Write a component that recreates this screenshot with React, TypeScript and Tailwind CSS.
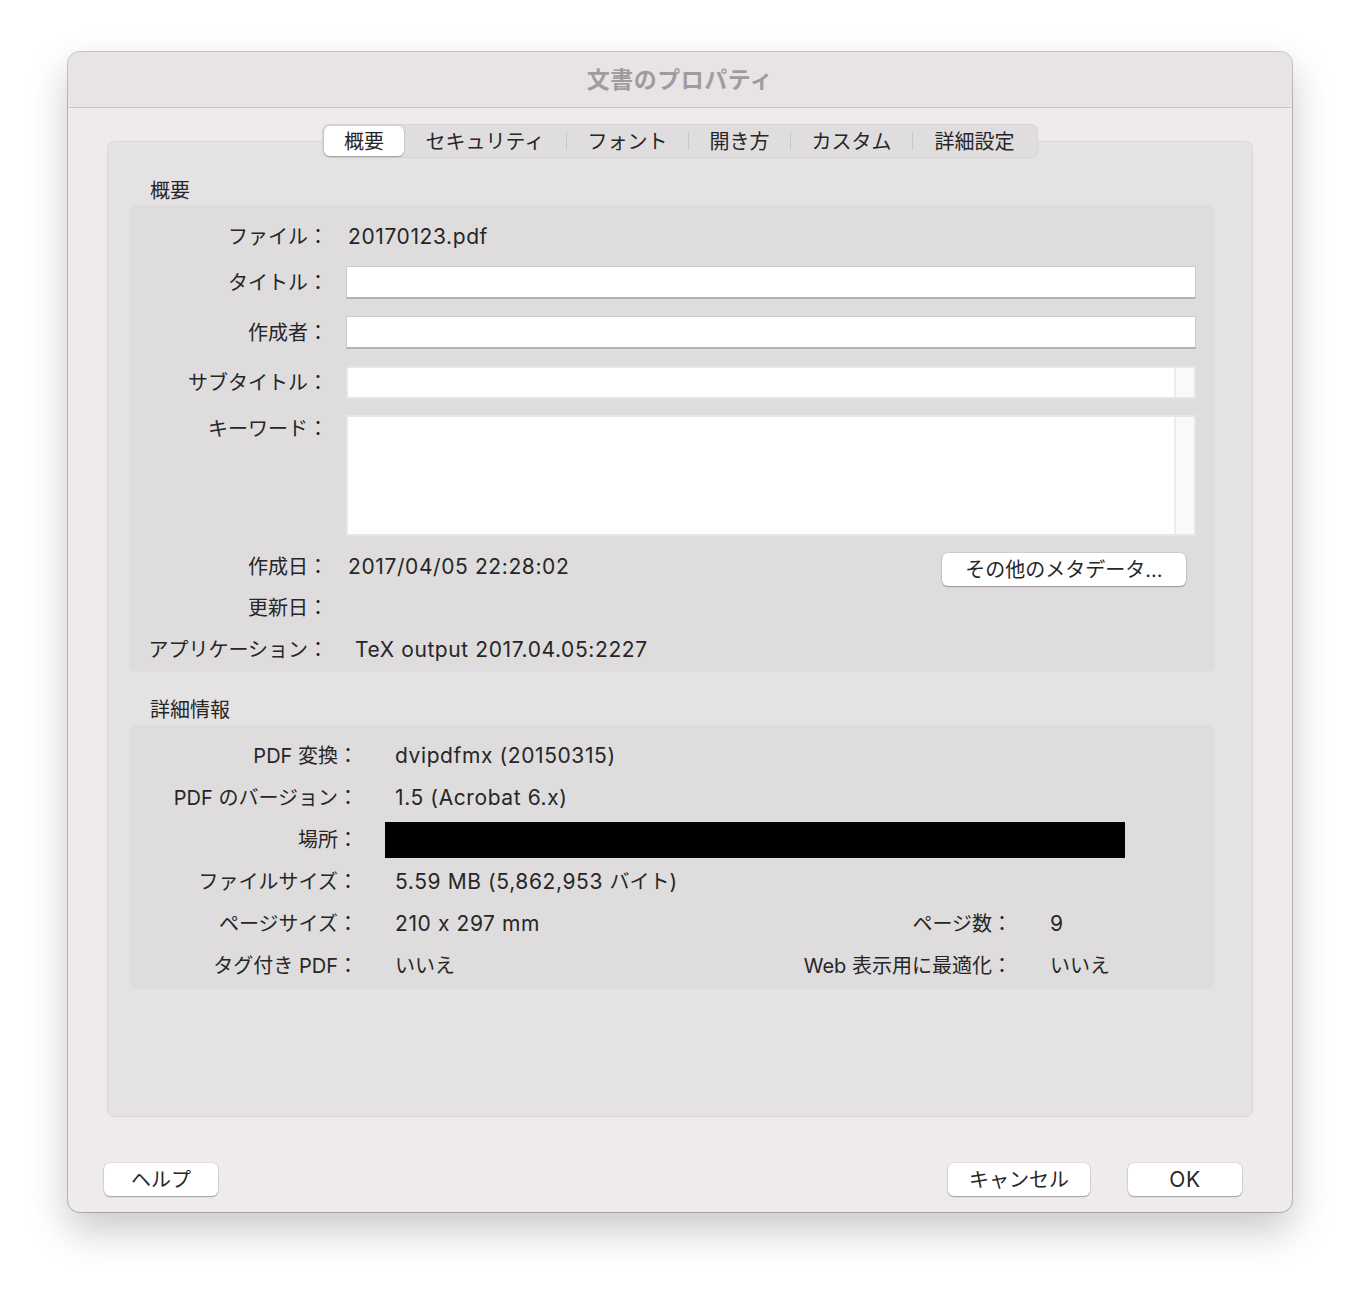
import React from "react";

const tabs = [
  { label: "概要", w: "w-[80px]" },
  { label: "セキュリティ", w: "w-[162px]" },
  { label: "フォント", w: "w-[121px]" },
  { label: "開き方", w: "w-[101px]" },
  { label: "カスタム", w: "w-[121px]" },
  { label: "詳細設定", w: "w-[123px]" },
];

const LAT = "text-[21px] tracking-[0.6px] whitespace-nowrap";

function Field() {
  return (
    <div className="h-[33px] w-[850px] bg-white border border-[#cbc9ca] border-b-2 border-b-[#b4b2b3]" />
  );
}

function ScrollField({ h }: { h: string }) {
  return (
    <div className={`${h} w-[850px] bg-white border-2 border-[#e7e5e6] flex`}>
      <div className="flex-1" />
      <div className="w-[20px] h-full bg-[#f9f9f9] border-l-2 border-[#ececec]" />
    </div>
  );
}

function Btn({ children, w }: { children: React.ReactNode; w: string }) {
  return (
    <div
      className={`${w} h-[33px] bg-white rounded-[6px] flex items-center justify-center text-[20px] text-[#262626] shadow-[0_0_0_0.5px_rgba(0,0,0,0.12),0_1px_1.5px_rgba(0,0,0,0.3)]`}
    >
      {children}
    </div>
  );
}

function Row1({
  label,
  children,
  className = "",
  top = false,
}: {
  label: string;
  children?: React.ReactNode;
  className?: string;
  top?: boolean;
}) {
  return (
    <div className={`flex ${top ? "items-start" : "items-center"} ${className}`}>
      <div className={`w-[199px] shrink-0 text-right whitespace-nowrap ${top ? "h-[28px] leading-[28px]" : ""}`}>
        {label}：
      </div>
      {children}
    </div>
  );
}

function Row2({
  label,
  value,
  label2,
  value2,
}: {
  label: string;
  value?: React.ReactNode;
  label2?: string;
  value2?: React.ReactNode;
}) {
  return (
    <div className="flex items-center h-[32px]">
      <div className="w-[229px] shrink-0 text-right whitespace-nowrap">{label}：</div>
      {value}
      {label2 && (
        <>
          <div className="w-[222px] shrink-0 text-right whitespace-nowrap">{label2}：</div>
          <div className="ml-[38px] whitespace-nowrap">{value2}</div>
        </>
      )}
    </div>
  );
}

export default function App() {
  return (
    <div className="w-[1360px] h-[1296px] bg-white pt-[52px] pl-[68px] font-['Inter','Noto_Sans_CJK_JP',sans-serif] [font-feature-settings:'calt'_0] text-[#262626] text-[20px]">
      <div className="w-[1224px] h-[1160px] rounded-[12px] bg-[#efebec] overflow-hidden flex flex-col shadow-[0_0_0_1px_rgba(0,0,0,0.22),0_18px_40px_rgba(0,0,0,0.22)]">
        {/* title bar */}
        <div className="h-[56px] shrink-0 bg-[#e8e4e5] border-b border-[#c9c5c6] flex items-center justify-center pt-[1px]">
          <span className="font-bold text-[23px] text-[#a09c9d] tracking-[0.5px]">文書のプロパティ</span>
        </div>

        {/* tabs */}
        <div className="mt-[16px] flex justify-center relative z-10">
          <div className="h-[34px] flex items-stretch p-px rounded-[7px] bg-[#e0dddf] border border-[#d6d3d4]">
            {tabs.map((t, i) => (
              <React.Fragment key={t.label}>
                {i > 1 && <div className="w-px self-center h-[18px] bg-[#c9c6c7]" />}
                <div
                  className={`${t.w} flex items-center justify-center text-[20px] pt-[2px] ${
                    i === 0
                      ? "bg-white rounded-[6px] shadow-[0_0_0_0.5px_rgba(0,0,0,0.1),0_1px_1.5px_rgba(0,0,0,0.25)]"
                      : ""
                  }`}
                >
                  {t.label}
                </div>
              </React.Fragment>
            ))}
          </div>
        </div>

        {/* panel */}
        <div className="-mt-[17px] mx-[39px] h-[976px] shrink-0 rounded-[7px] bg-[#e5e2e3] border border-[#dad6d7] pt-[37px] pl-[21px]">
          <div className="ml-[21px] h-[24px] leading-[24px]">概要</div>
          <div className="mt-[2px] w-[1086px] h-[467px] rounded-[7px] bg-[#dedcdd] pt-[16px] flex flex-col">
            <Row1 label="ファイル" className="h-[32px]">
              <div className={`ml-[20px] ${LAT}`}>20170123.pdf</div>
            </Row1>
            <Row1 label="タイトル" className="mt-[13px]">
              <div className="ml-[18px]">
                <Field />
              </div>
            </Row1>
            <Row1 label="作成者" className="mt-[17px]">
              <div className="ml-[18px]">
                <Field />
              </div>
            </Row1>
            <Row1 label="サブタイトル" className="mt-[17px]">
              <div className="ml-[18px]">
                <ScrollField h="h-[33px]" />
              </div>
            </Row1>
            <Row1 label="キーワード" className="mt-[16px]" top>
              <div className="ml-[18px]">
                <ScrollField h="h-[121px]" />
              </div>
            </Row1>
            <div className="mt-[15px] h-[32px] flex items-center">
              <div className="w-[199px] shrink-0 text-right">作成日：</div>
              <div className={`ml-[20px] ${LAT}`}>2017/04/05 22:28:02</div>
              <div className="flex-1" />
              <div className="mr-[29px] mt-[5px]">
                <Btn w="w-[244px]">その他のメタデータ...</Btn>
              </div>
            </div>
            <Row1 label="更新日" className="mt-[9px] h-[32px]" />
            <Row1 label="アプリケーション" className="mt-[10px] h-[32px]">
              <div className={`ml-[27px] ${LAT}`}>TeX output 2017.04.05:2227</div>
            </Row1>
          </div>

          <div className="mt-[26px] ml-[21px] h-[24px] leading-[24px]">詳細情報</div>
          <div className="mt-[3px] w-[1086px] h-[264px] rounded-[7px] bg-[#dedcdd] pt-[15px] flex flex-col gap-[10px]">
            <Row2 label="PDF 変換" value={<div className={`ml-[37px] ${LAT}`}>dvipdfmx (20150315)</div>} />
            <Row2 label="PDF のバージョン" value={<div className={`ml-[37px] ${LAT}`}>1.5 (Acrobat 6.x)</div>} />
            <Row2 label="場所" value={<div className="ml-[27px] w-[740px] h-[36px] bg-black" />} />
            <Row2
              label="ファイルサイズ"
              value={<div className={`ml-[37px] ${LAT}`}>5.59 MB (5,862,953 <span className="text-[20px] tracking-normal">バイト</span>)</div>}
            />
            <Row2
              label="ページサイズ"
              value={<div className={`ml-[37px] w-[395px] shrink-0 ${LAT}`}>210 x 297 mm</div>}
              label2="ページ数"
              value2={<span className={LAT}>9</span>}
            />
            <Row2
              label="タグ付き PDF"
              value={<div className="ml-[37px] w-[395px] shrink-0">いいえ</div>}
              label2="Web 表示用に最適化"
              value2="いいえ"
            />
          </div>
        </div>

        {/* footer */}
        <div className="mt-[46px] flex items-center pl-[36px] pr-[50px]">
          <Btn w="w-[114px]">ヘルプ</Btn>
          <div className="flex-1" />
          <Btn w="w-[142px]">キャンセル</Btn>
          <div className="w-[38px]" />
          <Btn w="w-[114px]">
            <span className="text-[21px] tracking-[0.6px]">OK</span>
          </Btn>
        </div>
      </div>
    </div>
  );
}
